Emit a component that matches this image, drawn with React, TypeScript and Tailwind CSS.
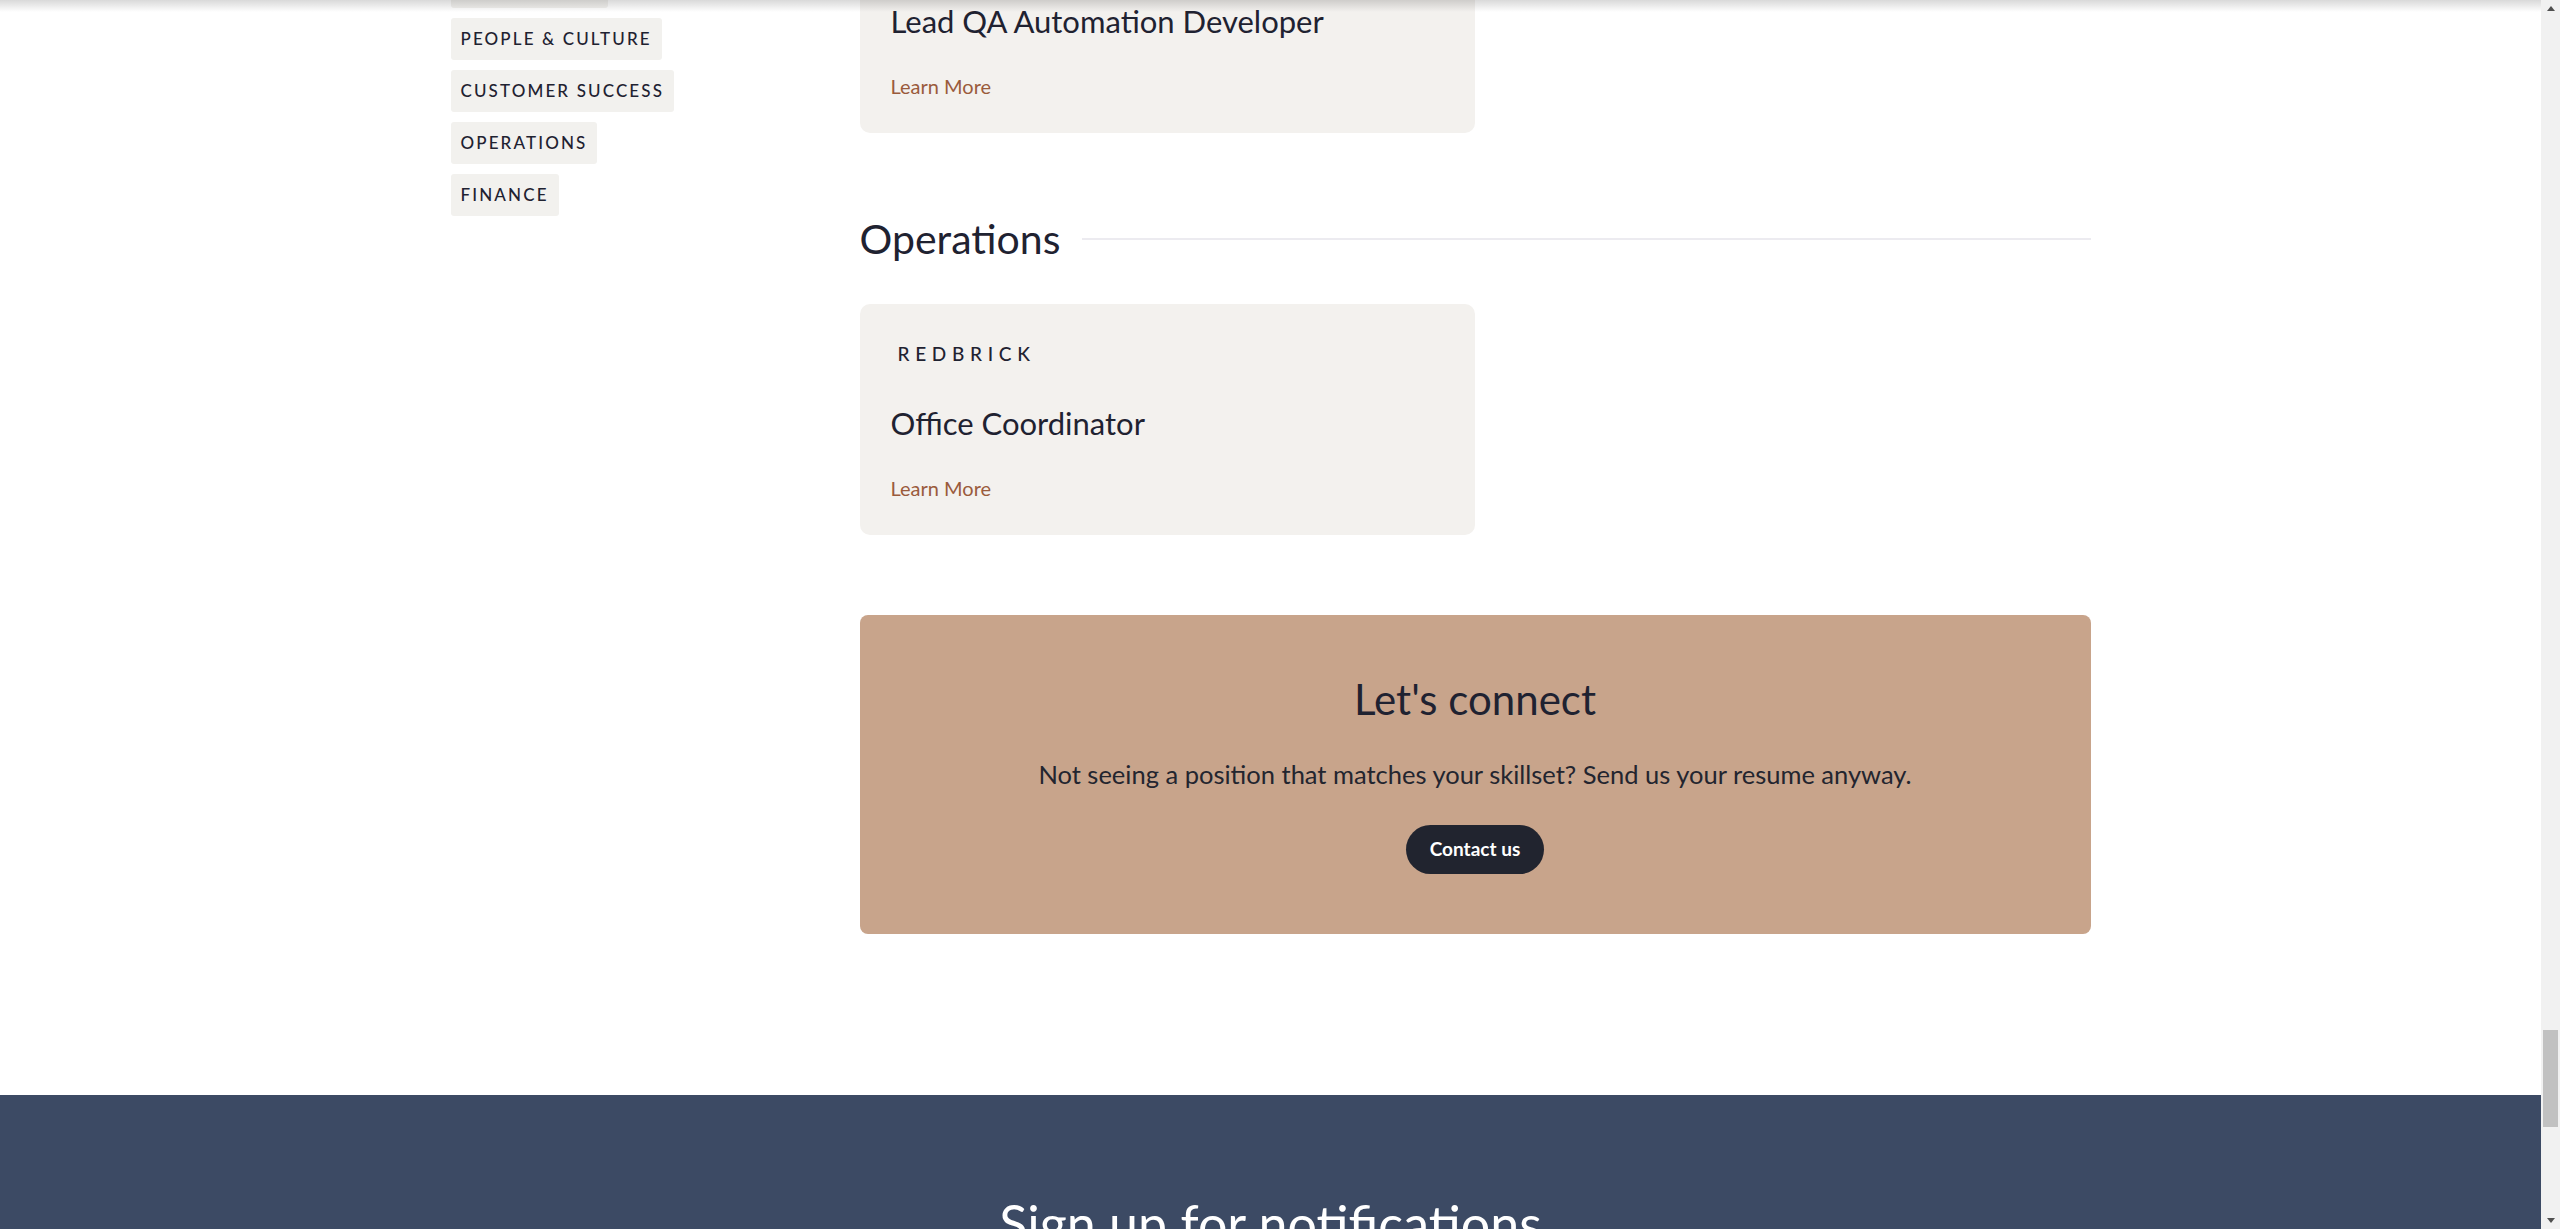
import React from 'react';

const departments = ['ENGINEERING', 'PEOPLE & CULTURE', 'CUSTOMER SUCCESS', 'OPERATIONS', 'FINANCE'];

const JobCard: React.FC<{ title: string; company?: string }> = ({ title, company }) => (
  <div className="flex w-[615px] flex-col rounded-[10px] bg-[#f3f1ee] px-[31px] pt-[40px] pb-[33px]">
    <div className="h-[19px] pl-[7px] text-[19px] leading-none font-medium tracking-[0.3em] text-[#1f2231]">
      {company}
    </div>
    <h3 className="mt-[40px] text-[31px] leading-[40px] text-[#1f2231]">{title}</h3>
    <a href="#" className="mt-[31px] text-[20px] leading-[28px] text-[#9a5b3c]">
      Learn More
    </a>
  </div>
);

const Scrollbar = () => (
  <div className="flex w-[19px] shrink-0 flex-col bg-[#f1f1f1]">
    <div className="flex h-[17px] items-center justify-center">
      <svg width="8" height="5" viewBox="0 0 8 5">
        <path d="M4 0L8 5H0z" fill="#505050" />
      </svg>
    </div>
    <div className="flex-1" />
    <div className="mx-auto h-[97px] w-[15px] bg-[#c1c1c1]" />
    <div className="h-[85px]" />
    <div className="flex h-[17px] items-center justify-center">
      <svg width="8" height="5" viewBox="0 0 8 5">
        <path d="M0 0H8L4 5z" fill="#505050" />
      </svg>
    </div>
  </div>
);

export default function App() {
  return (
    <div className="flex h-[1229px] overflow-hidden bg-white font-['Lato','Open_Sans',sans-serif] text-[#1f2231]">
      <div className="relative flex-1 overflow-hidden">
        {/* shadow from the sticky header sitting above the viewport */}
        <div className="pointer-events-none absolute inset-x-0 top-0 z-10 h-[12px] bg-gradient-to-b from-black/15 to-transparent" />

        <div className="-mt-[98px]">
          <section className="mx-auto flex w-[1640px]">
            <aside className="w-[409px] shrink-0 pt-[64px]">
              <ul className="flex flex-col items-start gap-[10px]">
                {departments.map((d) => (
                  <li
                    key={d}
                    className="rounded-[3px] bg-[#f2f1ee] px-[10px] py-[9px] text-[17px] leading-[24px] font-medium tracking-[0.125em] text-[#1f2231]"
                  >
                    {d}
                  </li>
                ))}
              </ul>
            </aside>

            <main className="flex-1">
              <JobCard title="Lead QA Automation Developer" />

              <div className="mt-[82px] flex items-center gap-[22px]">
                <h2 className="text-[41px] leading-[48px]">Operations</h2>
                <div className="h-[2px] flex-1 bg-[#ecebf0]" />
              </div>

              <div className="mt-[41px]">
                <JobCard company="REDBRICK" title="Office Coordinator" />
              </div>

              <div className="mt-[80px] flex flex-col items-center rounded-[8px] bg-[#c8a48b] pt-[60px] pb-[60px]">
                <h2 className="text-[42px] leading-[48px]">Let's connect</h2>
                <p className="mt-[33px] text-[25.5px] leading-[36px] text-[#23252f]">
                  Not seeing a position that matches your skillset? Send us your resume anyway.
                </p>
                <button className="mt-[33px] h-[49px] rounded-full bg-[#21242f] px-[24px] text-[19px] font-bold text-white">
                  Contact us
                </button>
              </div>
            </main>
          </section>

          <footer className="mt-[161px] bg-[#3c4a64] pt-[97px] pb-[80px]">
            <h2 className="text-center text-[52px] leading-[62px] text-white">Sign up for notifications</h2>
          </footer>
        </div>
      </div>
      <Scrollbar />
    </div>
  );
}
